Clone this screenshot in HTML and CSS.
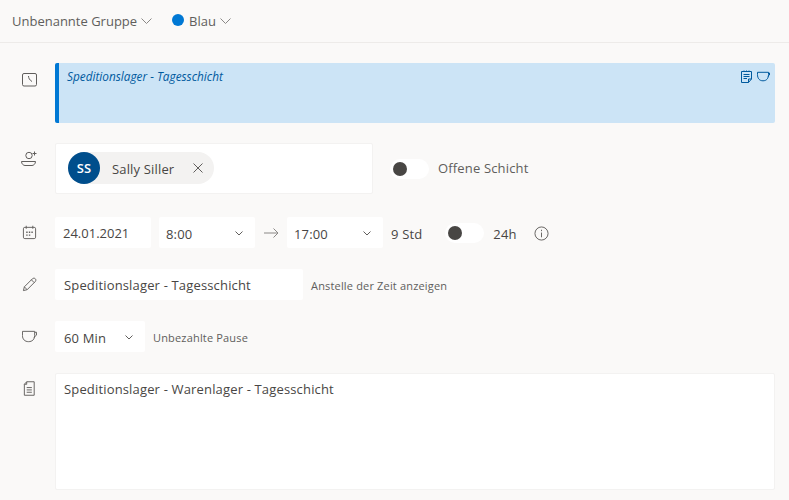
FILE: index.html
```html
<!DOCTYPE html>
<html lang="de">

<head>
  <meta charset="UTF-8">
  <meta name="viewport" content="width=device-width, initial-scale=1.0">
  <title>Schicht bearbeiten</title>
  <link rel="stylesheet" href="styles.css">
</head>

<body>
  <!-- Group and colour pickers -->
  <div class="topbar">
    <span class="picker">Unbenannte Gruppe
      <svg class="caret-wide" viewBox="0 0 11 6"><path d="M.5.5 5.5 5.5 10.5.5" /></svg>
    </span>
    <span class="picker picker-color"><span class="dot"></span>Blau
      <svg class="caret-wide" viewBox="0 0 11 6"><path d="M.5.5 5.5 5.5 10.5.5" /></svg>
    </span>
  </div>

  <div class="form">
    <div class="row row-shift">
      <svg class="icon" viewBox="0 0 15 15">
        <rect x=".5" y=".5" width="14" height="12.500" rx="1.500" />
        <path d="M6.500 3C6.500 5 7.500 7 10 8.500" />
      </svg>
      <div class="shift-card">
        <span class="shift-title">Speditionslager - Tagesschicht</span>
        <span class="shift-icons">
          <svg viewBox="0 0 11 13">
            <path d="M3 .5V2M5.500 .5V2M8 .5V2M.5 1.500H10.500V9L7.500 12.500H.5ZM2.500 4.500H8.500M2.500 6.500H8.500M2.500 8.500H6M7.500 12.500V9H10.500" />
          </svg>
          <svg class="cup" viewBox="0 0 13 10">
            <path d="M.5 .8H11.500V3C11.500 7 9.500 9.300 6 9.300S.5 7 .5 3ZM11.500 1.500H12.500V3.500L10.800 5" />
          </svg>
        </span>
      </div>
    </div>

    <div class="row row-person">
      <svg class="icon icon-person" viewBox="0 0 16 16">
        <circle cx="8" cy="4.500" r="3.200" />
        <path d="M.5 10.500H14.500C14.500 13 12.500 14.500 11 14.500H4C2.500 14.500 .5 13 .5 10.500ZM13.500 .5V4.500M11.500 2.500H15.500" />
      </svg>
      <div class="person-box">
        <div class="chip">
          <span class="avatar">SS</span>
          <span class="chip-name">Sally Siller</span>
          <svg class="chip-x" viewBox="0 0 10 10"><path d="M.5.5 9.500 9.500M9.500.5 .5 9.500" /></svg>
        </div>
      </div>
      <span class="toggle toggle-open"><span class="knob"></span></span>
      <span class="toggle-label">Offene Schicht</span>
    </div>

    <div class="row row-time">
      <svg class="icon" viewBox="0 0 16 16">
        <rect x="1.500" y="2.500" width="13" height="12" rx="1.500" />
        <path d="M4.500 .8V4M11.500 .8V4" />
        <path class="dots" d="M4.500 7h1.500v1.500H4.500zM7.300 7h1.500v1.500H7.300zM10 7h1.500v1.500H10zM4.500 10h1.500v1.500H4.500zM7.300 10h1.500v1.500H7.300z" />
      </svg>
      <div class="field field-date">24.01.2021</div>
      <div class="field field-select field-time">8:00
        <svg class="caret" viewBox="0 0 8 5"><path d="M.5.500 4 4 7.500.500" /></svg>
      </div>
      <svg class="arrow" viewBox="0 0 15 10"><path d="M0 5H14M9.500 .5 14 5 9.500 9.500" /></svg>
      <div class="field field-select field-time">17:00
        <svg class="caret" viewBox="0 0 8 5"><path d="M.5.500 4 4 7.500.500" /></svg>
      </div>
      <span class="hours">9 Std</span>
      <span class="toggle toggle-24"><span class="knob"></span></span>
      <span class="label-24">24h</span>
      <svg class="info" viewBox="0 0 16 16">
        <circle cx="8" cy="8" r="7" />
        <path d="M8 7V12M8 4V5.500" />
      </svg>
    </div>

    <div class="row row-name">
      <svg class="icon" viewBox="0 0 16 16">
        <path d="M1.500 14.500 2.500 10.500 11 2C12 1 13.500 1 14.300 2 15 2.800 15 4 14 5L5.500 13.500ZM2.500 10.500 5.500 13.500M10 3 13 6" />
      </svg>
      <div class="field field-name">Speditionslager - Tagesschicht</div>
      <span class="hint hint-name">Anstelle der Zeit anzeigen</span>
    </div>

    <div class="row row-break">
      <svg class="icon" viewBox="0 0 16 14">
        <path d="M.5 1.500H13.500V6C13.500 10 11 12.500 7 12.500S.5 10 .5 6ZM13.500 2.500H15.500V5.500L12.500 8" />
      </svg>
      <div class="field field-select field-break">60 Min
        <svg class="caret" viewBox="0 0 8 5"><path d="M.5.500 4 4 7.500.500" /></svg>
      </div>
      <span class="hint">Unbezahlte Pause</span>
    </div>

    <div class="row row-notes">
      <svg class="icon" viewBox="0 0 16 16">
        <path d="M5 .8H13V15.200H2.500V3.500ZM5 .8V3.500H2.500M5 7H10.500M5 9.500H10.500M5 12H10.500" />
      </svg>
      <div class="notes">Speditionslager - Warenlager - Tagesschicht</div>
    </div>
  </div>
</body>

</html>
```

FILE: styles.css
```css
body {
  margin: 0;
  height: 500px;
  overflow: hidden;
  background-color: #faf9f8;
  font-family: "Open Sans", "Noto Sans", sans-serif;
  font-size: 13px;
  letter-spacing: .16px;
  color: #484644;
}

svg {
  fill: none;
  stroke: #605e5c;
  stroke-width: 1;
}

.dots {
  fill: #605e5c;
  stroke: none;
}

.topbar {
  height: 42px;
  border-bottom: 1px solid #edebe9;
  padding-left: 12px;
  display: flex;
  align-items: center;
  letter-spacing: 0;
  color: #605e5c;
}

.picker {
  display: flex;
  align-items: center;
  white-space: nowrap;
}

.picker-color {
  margin-left: 20px;
}

.caret-wide {
  width: 11px;
  height: 6px;
  margin-left: 4px;
  stroke: #8a8886;
}

.dot {
  width: 12px;
  height: 12px;
  border-radius: 50%;
  background-color: #0078d4;
  margin-right: 5px;
  margin-top: -2px;
}

.form {
  padding: 20px 14px 0 22px;
}

.row {
  display: flex;
  align-items: center;
}

.icon {
  width: 15px;
  height: 15px;
  flex-shrink: 0;
  margin-right: 18px;
}

.row-shift {
  align-items: flex-start;
}

.row-shift .icon {
  margin-top: 10px;
}

.shift-card {
  flex: 1;
  height: 60px;
  box-sizing: border-box;
  border-left: 4px solid #0078d4;
  border-radius: 2px;
  background-color: #cce4f6;
  padding: 5px 5px 0 8px;
  display: flex;
  justify-content: space-between;
  align-items: flex-start;
}

.shift-title {
  font-size: 11.800px;
  font-style: italic;
  letter-spacing: 0;
  color: #005a9e;
}

.shift-icons {
  display: flex;
  gap: 5px;
  margin-top: 2px;
}

.shift-icons svg {
  width: 11px;
  height: 13px;
  stroke: #005a9e;
}

.shift-icons .cup {
  width: 13px;
}

.row-person {
  margin-top: 20px;
}

.icon-person {
  width: 16px;
  height: 16px;
  margin: -20px 18px 0 -1px;
}

.person-box {
  width: 318px;
  height: 51px;
  box-sizing: border-box;
  background-color: #fff;
  border: 1px solid #f3f2f1;
  border-radius: 2px;
  padding: 8px 12px;
}

.chip {
  display: inline-flex;
  align-items: center;
  height: 32px;
  padding-right: 11px;
  border-radius: 16px;
  background-color: #f3f2f1;
}

.avatar {
  width: 32px;
  height: 32px;
  border-radius: 50%;
  background-color: #004e8c;
  color: #fff;
  font-size: 13px;
  font-weight: 600;
  letter-spacing: 0;
  display: flex;
  align-items: center;
  justify-content: center;
}

.chip-name {
  margin-left: 12px;
  padding-top: 1px;
}

.chip-x {
  width: 10px;
  height: 10px;
  margin-left: 19px;
}

.toggle {
  width: 39px;
  height: 20px;
  box-sizing: border-box;
  border-radius: 10px;
  background-color: #fff;
  padding: 3px;
  display: block;
  flex-shrink: 0;
}

.knob {
  display: block;
  width: 14px;
  height: 14px;
  border-radius: 50%;
  background-color: #484644;
}

.toggle-open {
  margin-left: 17px;
}

.toggle-label {
  margin-left: 9px;
  padding-bottom: 2px;
  color: #605e5c;
}

.row-time {
  margin-top: 23px;
}

.field {
  height: 31px;
  box-sizing: border-box;
  background-color: #fff;
  border-radius: 2px;
  display: flex;
  align-items: center;
  white-space: nowrap;
}

.field-date {
  width: 96px;
  padding-left: 8px;
  letter-spacing: 0;
}

.field-select {
  justify-content: space-between;
  padding: 2px 12px 0 7px;
}

.caret {
  width: 8px;
  height: 5px;
}

.field-time {
  width: 96px;
  margin-left: 8px;
}

.arrow {
  width: 15px;
  height: 10px;
  margin: 0 8px 0 9px;
  stroke: #8a8886;
}

.arrow + .field-time {
  margin-left: 0;
}

.hours {
  margin-left: 8px;
  padding-top: 3px;
}

.toggle-24 {
  margin-left: 23px;
}

.label-24 {
  margin-left: 9px;
  padding-top: 3px;
}

.info {
  width: 15px;
  height: 15px;
  margin: 1px 0 0 17px;
}

.row-name {
  margin-top: 21px;
}

.field-name {
  width: 248px;
  padding-left: 9px;
}

.hint {
  margin-left: 8px;
  padding-top: 1px;
  font-size: 11px;
  letter-spacing: .17px;
  color: #605e5c;
}

.row-break {
  margin-top: 21px;
}

.field-break {
  width: 90px;
  padding-left: 9px;
}

.row-notes {
  margin-top: 21px;
  align-items: flex-start;
}

.row-notes .icon {
  margin-top: 8px;
}

.notes {
  flex: 1;
  height: 117px;
  box-sizing: border-box;
  background-color: #fff;
  border: 1px solid #f3f2f1;
  border-radius: 2px;
  padding: 6px 8px;
}
```
